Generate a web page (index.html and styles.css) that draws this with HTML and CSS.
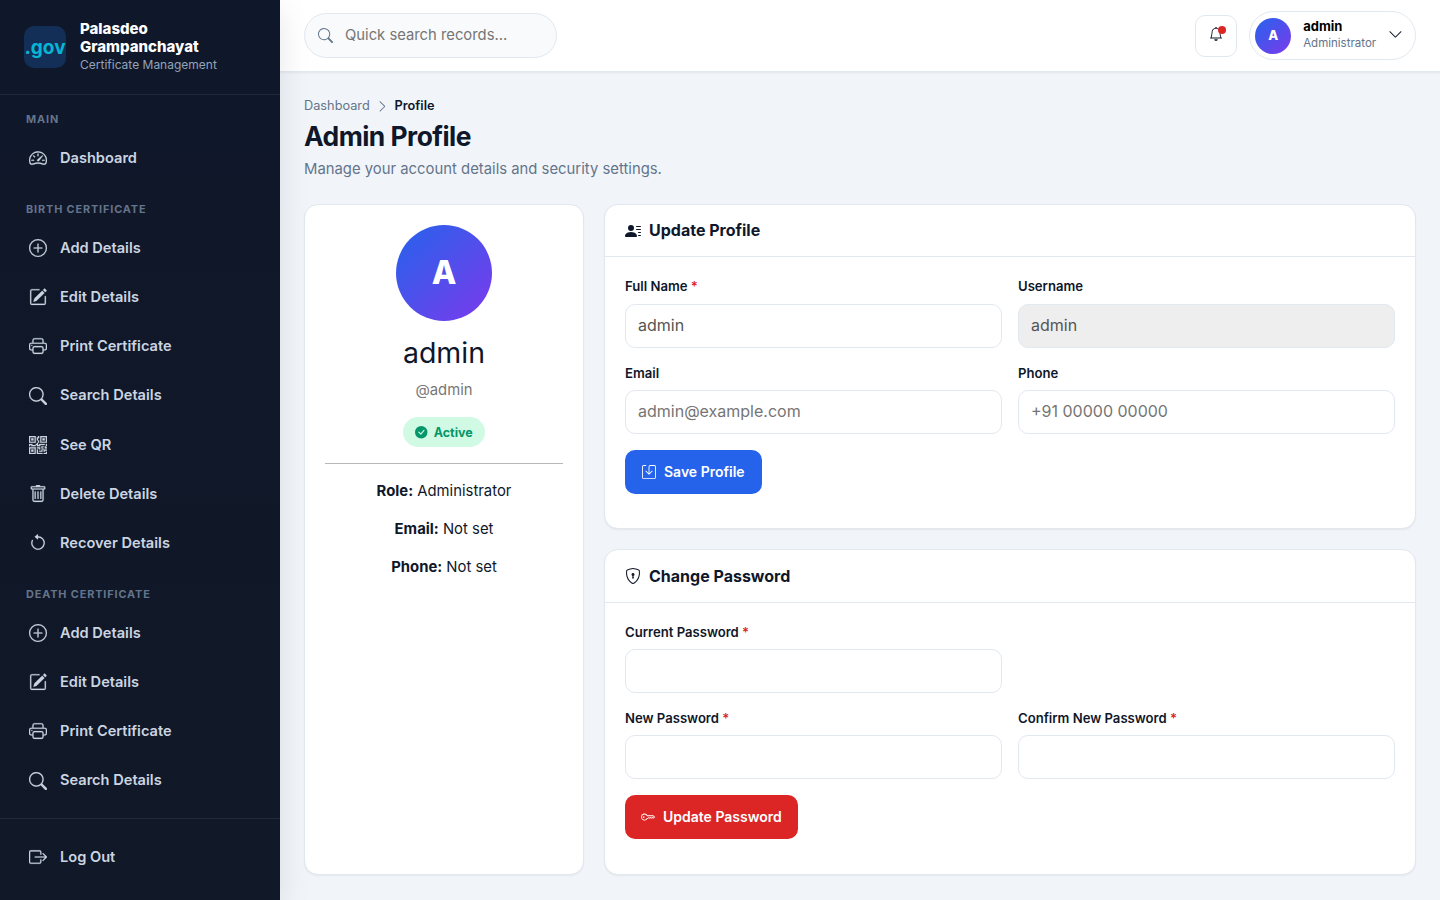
FILE: index.html
```html
<!DOCTYPE html>
<html lang="en">
<head>
    <meta charset="UTF-8">
    <meta name="viewport" content="width=device-width, initial-scale=1.0">
    <title>Admin Profile - Palasdeo Grampanchayat</title>
    <link rel="stylesheet" href="styles.css">
</head>
<body>

    <!-- Icons used more than once -->
    <svg class="icon-defs" width="0" height="0">
        <symbol id="i-plus" viewBox="0 0 16 16">
            <path d="M8 15A7 7 0 1 1 8 1a7 7 0 0 1 0 14m0 1A8 8 0 1 0 8 0a8 8 0 0 0 0 16"/>
            <path d="M8 4a.5.5 0 0 1 .5.5v3h3a.5.5 0 0 1 0 1h-3v3a.5.5 0 0 1-1 0v-3h-3a.5.5 0 0 1 0-1h3v-3A.5.5 0 0 1 8 4"/>
        </symbol>
        <symbol id="i-edit" viewBox="0 0 16 16">
            <path d="M15.502 1.94a.5.5 0 0 1 0 .706L14.459 3.69l-2-2L13.502.646a.5.5 0 0 1 .707 0l1.293 1.293zm-1.75 2.456-2-2L4.939 9.21a.5.5 0 0 0-.121.196l-.805 2.414a.25.25 0 0 0 .316.316l2.414-.805a.5.5 0 0 0 .196-.12z"/>
            <path fill-rule="evenodd" d="M1 13.5A1.5 1.5 0 0 0 2.5 15h11a1.5 1.5 0 0 0 1.5-1.5v-6a.5.5 0 0 0-1 0v6a.5.5 0 0 1-.5.5h-11a.5.5 0 0 1-.5-.5v-11a.5.5 0 0 1 .5-.5H9a.5.5 0 0 0 0-1H2.5A1.5 1.5 0 0 0 1 2.5z"/>
        </symbol>
        <symbol id="i-print" viewBox="0 0 16 16">
            <path d="M2.5 8a.5.5 0 1 0 0-1 .5.5 0 0 0 0 1"/>
            <path d="M5 1a2 2 0 0 0-2 2v2H2a2 2 0 0 0-2 2v3a2 2 0 0 0 2 2h1v1a2 2 0 0 0 2 2h6a2 2 0 0 0 2-2v-1h1a2 2 0 0 0 2-2V7a2 2 0 0 0-2-2h-1V3a2 2 0 0 0-2-2zM4 3a1 1 0 0 1 1-1h6a1 1 0 0 1 1 1v2H4zm1 5a2 2 0 0 0-2 2v1H2a1 1 0 0 1-1-1V7a1 1 0 0 1 1-1h12a1 1 0 0 1 1 1v3a1 1 0 0 1-1 1h-1v-1a2 2 0 0 0-2-2zm7 2v3a1 1 0 0 1-1 1H5a1 1 0 0 1-1-1v-3a1 1 0 0 1 1-1h6a1 1 0 0 1 1 1"/>
        </symbol>
        <symbol id="i-search" viewBox="0 0 16 16">
            <path d="M11.742 10.344a6.5 6.5 0 1 0-1.397 1.398h-.001q.044.06.098.115l3.85 3.85a1 1 0 0 0 1.415-1.414l-3.85-3.85a1 1 0 0 0-.115-.1zM12 6.5a5.5 5.5 0 1 1-11 0 5.5 5.5 0 0 1 11 0"/>
        </symbol>
    </svg>

    <aside class="sidebar">
        <div class="brand">
            <div class="brand-logo">.gov</div>
            <div class="brand-text">
                <div class="brand-name">Palasdeo Grampanchayat</div>
                <div class="brand-sub">Certificate Management</div>
            </div>
        </div>

        <nav class="menu">
            <div class="menu-label">Main</div>
            <a class="menu-link" href="#">
                <svg class="icon" viewBox="0 0 16 16"><path d="M8 4a.5.5 0 0 1 .5.5V6a.5.5 0 0 1-1 0V4.5A.5.5 0 0 1 8 4M3.732 5.732a.5.5 0 0 1 .707 0l.915.914a.5.5 0 1 1-.708.708l-.914-.915a.5.5 0 0 1 0-.707M2 10a.5.5 0 0 1 .5-.5h1.586a.5.5 0 0 1 0 1H2.5A.5.5 0 0 1 2 10m9.5 0a.5.5 0 0 1 .5-.5h1.5a.5.5 0 0 1 0 1H12a.5.5 0 0 1-.5-.5m.754-4.246a.39.39 0 0 0-.527-.02L7.547 9.31a.91.91 0 1 0 1.302 1.258l3.434-4.297a.39.39 0 0 0-.029-.518z"/><path fill-rule="evenodd" d="M0 10a8 8 0 1 1 15.547 2.661c-.442 1.253-1.845 1.602-2.932 1.25C11.309 13.488 9.475 13 8 13c-1.474 0-3.31.488-4.615.911-1.087.352-2.49.003-2.932-1.25A8 8 0 0 1 0 10m8-7a7 7 0 0 0-6.603 9.329c.203.575.923.876 1.68.63C4.397 12.533 6.358 12 8 12s3.604.532 4.923.96c.757.245 1.477-.056 1.68-.631A7 7 0 0 0 8 3"/></svg>
                Dashboard
            </a>

            <div class="menu-label">Birth Certificate</div>
            <a class="menu-link" href="#"><svg class="icon"><use href="#i-plus"/></svg>Add Details</a>
            <a class="menu-link" href="#"><svg class="icon"><use href="#i-edit"/></svg>Edit Details</a>
            <a class="menu-link" href="#"><svg class="icon"><use href="#i-print"/></svg>Print Certificate</a>
            <a class="menu-link" href="#"><svg class="icon"><use href="#i-search"/></svg>Search Details</a>
            <a class="menu-link" href="#">
                <svg class="icon" viewBox="0 0 16 16"><path d="M2 2h2v2H2z"/><path d="M6 0v6H0V0zM5 1H1v4h4zM4 12H2v2h2z"/><path d="M6 10v6H0v-6zm-5 1v4h4v-4zm11-9h2v2h-2z"/><path d="M10 0v6h6V0zm5 1v4h-4V1zM8 1V0h1v2H8v2H7V1zm0 5V4h1v2zM6 8V7h1V6h1v2h1V7h5v1h-4v1H7V8zm0 0v1H2V8H1v1H0V7h3v1zm10 1h-1V7h1zm-1 0h-1v2h2v-1h-1zm-4 0h2v1h-1v1h-1zm2 3v-1h-1v1h-1v1H9v1h3v-2zm0 0h3v1h-2v1h-1zm-4-1v1h1v-2H7v1z"/><path d="M7 12h1v3h4v1H7zm9 2v2h-3v-1h2v-1z"/></svg>
                See QR
            </a>
            <a class="menu-link" href="#">
                <svg class="icon" viewBox="0 0 16 16"><path d="M5.5 5.5A.5.5 0 0 1 6 6v6a.5.5 0 0 1-1 0V6a.5.5 0 0 1 .5-.5m2.5 0a.5.5 0 0 1 .5.5v6a.5.5 0 0 1-1 0V6a.5.5 0 0 1 .5-.5m3 .5a.5.5 0 0 0-1 0v6a.5.5 0 0 0 1 0z"/><path d="M14.5 3a1 1 0 0 1-1 1H13v9a2 2 0 0 1-2 2H5a2 2 0 0 1-2-2V4h-.5a1 1 0 0 1-1-1V2a1 1 0 0 1 1-1H6a1 1 0 0 1 1-1h2a1 1 0 0 1 1 1h3.5a1 1 0 0 1 1 1zM4.118 4 4 4.059V13a1 1 0 0 0 1 1h6a1 1 0 0 0 1-1V4.059L11.882 4zM2.5 3h11V2h-11z"/></svg>
                Delete Details
            </a>
            <a class="menu-link" href="#">
                <svg class="icon" viewBox="0 0 16 16"><path fill-rule="evenodd" d="M8 3a5 5 0 1 1-4.546 2.914.5.5 0 0 0-.908-.417A6 6 0 1 0 8 2z"/><path d="M8 4.466V.534a.25.25 0 0 0-.41-.192L5.23 2.308a.25.25 0 0 0 0 .384l2.36 1.966A.25.25 0 0 0 8 4.466"/></svg>
                Recover Details
            </a>

            <div class="menu-label">Death Certificate</div>
            <a class="menu-link" href="#"><svg class="icon"><use href="#i-plus"/></svg>Add Details</a>
            <a class="menu-link" href="#"><svg class="icon"><use href="#i-edit"/></svg>Edit Details</a>
            <a class="menu-link" href="#"><svg class="icon"><use href="#i-print"/></svg>Print Certificate</a>
            <a class="menu-link" href="#"><svg class="icon"><use href="#i-search"/></svg>Search Details</a>
        </nav>

        <div class="sidebar-footer">
            <a class="menu-link" href="#">
                <svg class="icon" viewBox="0 0 16 16"><path fill-rule="evenodd" d="M10 12.5a.5.5 0 0 1-.5.5h-8a.5.5 0 0 1-.5-.5v-9a.5.5 0 0 1 .5-.5h8a.5.5 0 0 1 .5.5v2a.5.5 0 0 0 1 0v-2A1.5 1.5 0 0 0 9.5 2h-8A1.5 1.5 0 0 0 0 3.5v9A1.5 1.5 0 0 0 1.5 14h8a1.5 1.5 0 0 0 1.5-1.5v-2a.5.5 0 0 0-1 0z"/><path fill-rule="evenodd" d="M15.854 8.354a.5.5 0 0 0 0-.708l-3-3a.5.5 0 0 0-.708.708L14.293 7.5H5.5a.5.5 0 0 0 0 1h8.793l-2.147 2.146a.5.5 0 0 0 .708.708z"/></svg>
                Log Out
            </a>
        </div>
    </aside>

    <div class="page">
        <header class="topbar">
            <div class="search-box">
                <svg class="icon"><use href="#i-search"/></svg>
                <input type="text" placeholder="Quick search records...">
            </div>

            <div class="topbar-right">
                <button type="button" class="bell-btn">
                    <svg class="icon" viewBox="0 0 16 16"><path d="M8 16a2 2 0 0 0 2-2H6a2 2 0 0 0 2 2M8 1.918l-.797.161A4 4 0 0 0 4 6c0 .628-.134 2.197-.459 3.742-.16.767-.376 1.566-.663 2.258h10.244c-.287-.692-.502-1.49-.663-2.258C12.134 8.197 12 6.628 12 6a4 4 0 0 0-3.203-3.92zM14.22 12c.223.447.481.801.78 1H1c.299-.199.557-.553.78-1C2.68 10.2 3 6.88 3 6c0-2.42 1.72-4.44 4.005-4.901a1 1 0 1 1 1.99 0A5 5 0 0 1 13 6c0 .88.32 4.2 1.22 6"/></svg>
                    <span class="bell-dot"></span>
                </button>
                <div class="user-chip">
                    <div class="avatar">A</div>
                    <div class="user-info">
                        <div class="user-name">admin</div>
                        <div class="user-role">Administrator</div>
                    </div>
                    <svg class="icon" viewBox="0 0 16 16"><path fill-rule="evenodd" d="M1.646 4.646a.5.5 0 0 1 .708 0L8 10.293l5.646-5.647a.5.5 0 0 1 .708.708l-6 6a.5.5 0 0 1-.708 0l-6-6a.5.5 0 0 1 0-.708"/></svg>
                </div>
            </div>
        </header>

        <main class="content">
            <div class="page-head">
                <div class="breadcrumb">
                    <span>Dashboard</span>
                    <svg class="icon" viewBox="0 0 16 16"><path fill-rule="evenodd" d="M4.646 1.646a.5.5 0 0 1 .708 0l6 6a.5.5 0 0 1 0 .708l-6 6a.5.5 0 0 1-.708-.708L10.293 8 4.646 2.354a.5.5 0 0 1 0-.708"/></svg>
                    <span class="current">Profile</span>
                </div>
                <h1>Admin Profile</h1>
                <p class="page-sub">Manage your account details and security settings.</p>
            </div>

            <div class="profile-grid">
                <section class="card summary">
                    <div class="avatar avatar-lg">A</div>
                    <h2>admin</h2>
                    <p class="handle">@admin</p>
                    <span class="badge">
                        <svg class="icon" viewBox="0 0 16 16"><path d="M16 8A8 8 0 1 1 0 8a8 8 0 0 1 16 0m-3.97-3.03a.75.75 0 0 0-1.08.022L7.477 9.417 5.384 7.323a.75.75 0 0 0-1.06 1.06L6.97 11.03a.75.75 0 0 0 1.079-.02l3.992-4.99a.75.75 0 0 0-.01-1.05z"/></svg>
                        Active
                    </span>
                    <hr>
                    <p><strong>Role:</strong> Administrator</p>
                    <p><strong>Email:</strong> Not set</p>
                    <p><strong>Phone:</strong> Not set</p>
                </section>

                <div class="forms">
                    <section class="card">
                        <div class="card-header">
                            <svg class="icon" viewBox="0 0 16 16"><path d="M6 8a3 3 0 1 0 0-6 3 3 0 0 0 0 6m-5 6s-1 0-1-1 1-4 6-4 6 3 6 4-1 1-1 1zM11 3.5a.5.5 0 0 1 .5-.5h4a.5.5 0 0 1 0 1h-4a.5.5 0 0 1-.5-.5m.5 2.5a.5.5 0 0 0 0 1h4a.5.5 0 0 0 0-1zm2 3a.5.5 0 0 0 0 1h2a.5.5 0 0 0 0-1zm0 3a.5.5 0 0 0 0 1h2a.5.5 0 0 0 0-1z"/></svg>
                            <h3>Update Profile</h3>
                        </div>
                        <form class="card-body">
                            <div class="field">
                                <label for="fullName">Full Name <span class="req">*</span></label>
                                <input type="text" id="fullName" value="admin">
                            </div>
                            <div class="field">
                                <label for="username">Username</label>
                                <input type="text" id="username" value="admin" disabled>
                            </div>
                            <div class="field">
                                <label for="email">Email</label>
                                <input type="email" id="email" placeholder="admin@example.com">
                            </div>
                            <div class="field">
                                <label for="phone">Phone</label>
                                <input type="text" id="phone" placeholder="+91 00000 00000">
                            </div>
                            <div class="actions">
                                <button type="submit" class="btn btn-primary">
                                    <svg class="icon" viewBox="0 0 16 16"><path d="M2 1a1 1 0 0 0-1 1v12a1 1 0 0 0 1 1h12a1 1 0 0 0 1-1V2a1 1 0 0 0-1-1H9.5a1 1 0 0 0-1 1v7.293l2.646-2.647a.5.5 0 0 1 .708.708l-3.5 3.5a.5.5 0 0 1-.708 0l-3.5-3.5a.5.5 0 1 1 .708-.708L7.5 9.293V2a2 2 0 0 1 2-2H14a2 2 0 0 1 2 2v12a2 2 0 0 1-2 2H2a2 2 0 0 1-2-2V2a2 2 0 0 1 2-2h2.5a.5.5 0 0 1 0 1z"/></svg>
                                    Save Profile
                                </button>
                            </div>
                        </form>
                    </section>

                    <section class="card">
                        <div class="card-header">
                            <svg class="icon" viewBox="0 0 16 16"><path d="M5.338 1.59a61 61 0 0 0-2.837.856.48.48 0 0 0-.328.39c-.554 4.157.726 7.19 2.253 9.188a10.7 10.7 0 0 0 2.287 2.233c.346.244.652.42.893.533q.18.085.293.118a1 1 0 0 0 .101.025 1 1 0 0 0 .1-.025q.114-.034.294-.118c.24-.113.547-.29.893-.533a10.7 10.7 0 0 0 2.287-2.233c1.527-1.997 2.807-5.031 2.253-9.188a.48.48 0 0 0-.328-.39c-.651-.213-1.75-.56-2.837-.855C9.552 1.29 8.531 1.067 8 1.067c-.53 0-1.552.223-2.662.524zM5.072.56C6.157.265 7.31 0 8 0s1.843.265 2.928.56c1.11.3 2.229.655 2.887.87a1.54 1.54 0 0 1 1.044 1.262c.596 4.477-.787 7.795-2.465 9.99a11.8 11.8 0 0 1-2.517 2.453 7 7 0 0 1-1.048.625c-.28.132-.581.24-.829.24s-.548-.108-.829-.24a7 7 0 0 1-1.048-.625 11.8 11.8 0 0 1-2.517-2.453C1.928 10.487.545 7.169 1.141 2.692A1.54 1.54 0 0 1 2.185 1.43 63 63 0 0 1 5.072.56"/><path d="M9.5 6.5a1.5 1.5 0 0 1-1 1.415l.385 1.99a.5.5 0 0 1-.491.595h-.788a.5.5 0 0 1-.49-.595l.384-1.99a1.5 1.5 0 1 1 2-1.415"/></svg>
                            <h3>Change Password</h3>
                        </div>
                        <form class="card-body">
                            <div class="field">
                                <label for="currentPassword">Current Password <span class="req">*</span></label>
                                <input type="password" id="currentPassword">
                            </div>
                            <div class="field new-row">
                                <label for="newPassword">New Password <span class="req">*</span></label>
                                <input type="password" id="newPassword">
                            </div>
                            <div class="field">
                                <label for="confirmPassword">Confirm New Password <span class="req">*</span></label>
                                <input type="password" id="confirmPassword">
                            </div>
                            <div class="actions">
                                <button type="submit" class="btn btn-danger">
                                    <svg class="icon" viewBox="0 0 16 16"><path d="M0 8a4 4 0 0 1 7.465-2H14a.5.5 0 0 1 .354.146l1.5 1.5a.5.5 0 0 1 0 .708l-1.5 1.5a.5.5 0 0 1-.708 0L13 9.207l-.646.647a.5.5 0 0 1-.708 0L11 9.207l-.646.647a.5.5 0 0 1-.708 0L9 9.207l-.646.647A.5.5 0 0 1 8 10h-.535A4 4 0 0 1 0 8m4-3a3 3 0 1 0 2.712 4.285A.5.5 0 0 1 7.163 9h.63l.853-.854a.5.5 0 0 1 .708 0l.646.647.646-.647a.5.5 0 0 1 .708 0l.646.647.646-.647a.5.5 0 0 1 .708 0l.646.647.793-.793-1-1h-6.63a.5.5 0 0 1-.451-.285A3 3 0 0 0 4 5"/><path d="M4 8a1 1 0 1 1-2 0 1 1 0 0 1 2 0"/></svg>
                                    Update Password
                                </button>
                            </div>
                        </form>
                    </section>
                </div>
            </div>
        </main>
    </div>

</body>
</html>
```
FILE: styles.css
```css
* {
    box-sizing: border-box;
}

body {
    margin: 0;
    height: 100vh;
    display: flex;
    overflow: hidden;
    background: #f1f5f9;
    color: #0f172a;
    font-family: Inter, "Liberation Sans", sans-serif;
    font-size: 14.85px;
    line-height: 1.55;
}

input, button {
    font-family: inherit;
}

.icon-defs {
    position: absolute;
}

.icon {
    width: 1em;
    height: 1em;
    fill: currentColor;
    flex-shrink: 0;
}

/* Sidebar */
.sidebar {
    width: 280px;
    height: 100vh;
    flex-shrink: 0;
    display: flex;
    flex-direction: column;
    background: linear-gradient(180deg, #0f172a 0%, #111827 100%);
    box-shadow: 0 10px 30px rgba(15, 23, 42, 0.1);
    z-index: 2;
}

.brand {
    display: flex;
    align-items: center;
    gap: 14px;
    height: 95px;
    padding: 0 24px;
    border-bottom: 1px solid rgba(255, 255, 255, 0.08);
}

.brand-logo {
    width: 42px;
    height: 42px;
    display: flex;
    align-items: center;
    justify-content: center;
    padding-top: 1px;
    border-radius: 10px;
    background: #132f57;
    color: #06b6d4;
    font-size: 19px;
    font-weight: 700;
    overflow: hidden;
}

.brand-text {
    flex: 1;
}

.brand-name {
    color: #fff;
    font-size: 15px;
    font-weight: 800;
    line-height: 18px;
}

.brand-sub {
    color: #94a3b8;
    font-size: 12px;
    line-height: 18px;
}

.menu {
    flex: 1;
    min-height: 0;
    padding: 0 12px;
    overflow: hidden;
}

.menu-label {
    padding: 16px 14px 7.8px;
    color: #64748b;
    font-size: 0.68rem;
    font-weight: 700;
    letter-spacing: 0.08em;
    text-transform: uppercase;
}

.menu-link {
    display: flex;
    align-items: center;
    gap: 13px;
    height: 45.2px;
    margin-bottom: 4px;
    padding: 0 14px 0 17px;
    color: #cbd5e1;
    font-size: 14.6px;
    font-weight: 600;
    text-decoration: none;
}

    .menu-link .icon {
        width: 18px;
        height: 18px;
        stroke: currentColor;
        stroke-width: 0.2;
    }

.sidebar-footer {
    height: 82px;
    padding: 15.5px 12px;
    border-top: 1px solid rgba(255, 255, 255, 0.08);
}

/* Top bar */
.page {
    flex: 1;
    display: flex;
    flex-direction: column;
}

.topbar {
    display: flex;
    align-items: center;
    justify-content: space-between;
    height: 72px;
    padding: 0 24px;
    background: #fff;
    border-bottom: 1px solid #e2e8f0;
    box-shadow: 0 1px 2px rgba(15, 23, 42, 0.06);
}

.search-box {
    display: flex;
    align-items: center;
    gap: 12px;
    width: 253px;
    height: 45px;
    padding: 0 13px;
    border: 1px solid #e2e8f0;
    border-radius: 999px;
    background: #f8fafc;
    color: #64748b;
    font-size: 15px;
}

    .search-box input {
        flex: 1;
        min-width: 0;
        padding: 0 0 2px;
        border: none;
        outline: none;
        background: transparent;
        font-size: 14.8px;
    }

.topbar-right {
    display: flex;
    align-items: center;
    gap: 12px;
}

.bell-btn {
    position: relative;
    display: flex;
    align-items: center;
    justify-content: center;
    width: 42px;
    height: 42px;
    padding: 0 0 3px;
    border: 1px solid #e2e8f0;
    border-radius: 10px;
    background: #fff;
    color: #0f172a;
    font-size: 14px;
}

.bell-dot {
    position: absolute;
    top: 10px;
    right: 10px;
    width: 8px;
    height: 8px;
    border-radius: 50%;
    background: #dc2626;
}

.user-chip {
    display: flex;
    align-items: center;
    gap: 12px;
    height: 49px;
    padding: 0 12px 0 5px;
    border: 1px solid #e2e8f0;
    border-radius: 999px;
}

    .user-chip .icon {
        margin-bottom: 2px;
    }

.avatar {
    width: 36px;
    height: 36px;
    display: flex;
    align-items: center;
    justify-content: center;
    border-radius: 50%;
    background: linear-gradient(135deg, #2563eb, #7c3aed);
    color: #fff;
    font-size: 13px;
    font-weight: 800;
}

.user-info {
    padding-bottom: 2px;
}

.user-name {
    color: #000;
    font-size: 13px;
    font-weight: 700;
    line-height: 16px;
}

.user-role {
    color: #64748b;
    font-size: 0.72rem;
    line-height: 18px;
}

/* Page heading */
.content {
    flex: 1;
    display: flex;
    flex-direction: column;
    padding: 24px 24px 25.4px;
}

.page-head {
    margin-bottom: 23.8px;
}

.breadcrumb {
    display: flex;
    align-items: center;
    gap: 6px;
    color: #64748b;
    font-size: 12.75px;
    line-height: 20px;
}

    .breadcrumb .current {
        color: #0f172a;
        font-weight: 600;
    }

h1 {
    margin: 3px 0 3.5px;
    font-size: 1.65rem;
    font-weight: 700;
    letter-spacing: -0.02em;
    line-height: 35px;
}

.page-sub {
    margin: 0;
    color: #64748b;
}

/* Cards */
.profile-grid {
    flex: 1;
    display: grid;
    grid-template-columns: 280px 1fr;
    gap: 20px;
}

.card {
    background: #fff;
    border: 1px solid #e2e8f0;
    border-radius: 14px;
    box-shadow: 0 1px 2px rgba(15, 23, 42, 0.06);
}

.summary {
    padding: 20px;
    text-align: center;
}

.avatar-lg {
    width: 96px;
    height: 96px;
    margin: 0 auto;
    padding-bottom: 2px;
    font-size: 32px;
}

.summary h2 {
    margin: 14px 0 8px;
    font-size: 28.5px;
    font-weight: 400;
    line-height: 36px;
}

.summary p {
    margin: 0 0 15px;
}

.summary .handle {
    color: #777;
}

.badge {
    display: inline-flex;
    align-items: center;
    gap: 6px;
    height: 30px;
    padding: 0 12px;
    border-radius: 999px;
    background: #d1fae5;
    color: #059669;
    font-size: 0.78rem;
    font-weight: 700;
}

.summary hr {
    margin: 16px 0;
    border: none;
    border-top: 1px solid #b8b8b8;
}

.forms {
    display: grid;
    grid-template-rows: 1fr 1fr;
    gap: 20px;
}

.card-header {
    display: flex;
    align-items: center;
    gap: 8px;
    height: 52.1px;
    padding: 0 20px;
    border-bottom: 1px solid #e2e8f0;
    font-size: 16px;
}

    .card-header h3 {
        margin: 0;
        font-size: 16px;
        font-weight: 700;
    }

.card-body {
    display: grid;
    grid-template-columns: 1fr 1fr;
    gap: 16px;
    padding: 20px;
}

.field label {
    display: block;
    margin-bottom: 7px;
    font-size: 0.82rem;
    font-weight: 600;
    line-height: 19.2px;
}

.field input {
    display: block;
    width: 100%;
    height: 44px;
    padding: 0 12px 1px;
    border: 1px solid #e2e8f0;
    border-radius: 10px;
    background: #fff;
    color: #555;
    font-size: 16px;
}

    .field input:disabled {
        background: #eee;
    }

.new-row {
    grid-column: 1;
}

.req {
    color: #dc2626;
}

.actions {
    grid-column: 1 / -1;
}

.btn {
    display: inline-flex;
    align-items: center;
    gap: 8px;
    height: 44px;
    padding: 0 17px;
    border: none;
    border-radius: 10px;
    color: #fff;
    font-size: 14px;
    font-weight: 600;
}

.btn-primary {
    background: #2563eb;
}

.btn-danger {
    padding: 0 16px;
    background: #dc2626;
}
```
